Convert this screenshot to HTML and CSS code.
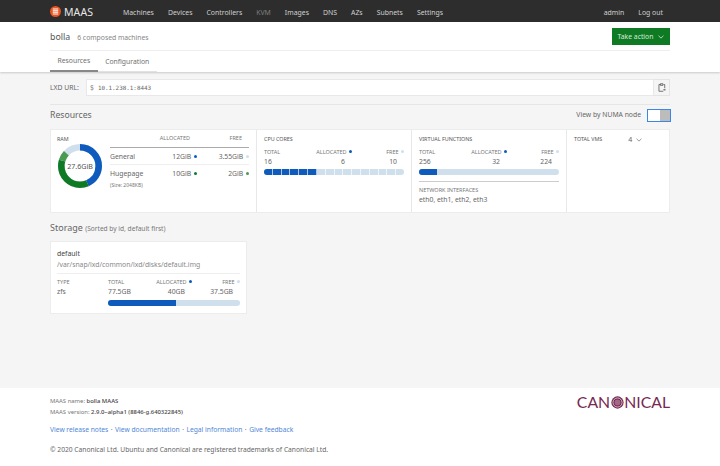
FILE: index.html
```html
<!DOCTYPE html>
<html lang="en">
<head>
<meta charset="utf-8">
<title>bolla | MAAS</title>
<link rel="stylesheet" href="styles.css">
</head>
<body>
<header class="nav">
  <div class="wrap nav-row">
    <a class="brand">
      <svg class="brand-mark" viewBox="0 0 12 12" width="11" height="11"><circle cx="6" cy="6" r="6" fill="#e95420"/><path d="M3 3.4h6M3 5.1h6M3 6.9h6M3 8.6h6" stroke="#fff" stroke-width="1.1"/></svg>
      <span class="brand-name">MAAS</span>
    </a>
    <nav class="nav-links">
      <a>Machines</a><a>Devices</a><a>Controllers</a><a class="is-active">KVM</a><a>Images</a><a>DNS</a><a>AZs</a><a>Subnets</a><a>Settings</a>
    </nav>
    <nav class="nav-links nav-user"><a>admin</a><a>Log out</a></nav>
  </div>
</header>

<section class="head">
  <div class="wrap">
    <div class="title-row">
      <div class="title"><h1>bolla</h1><span>6 composed machines</span></div>
      <button class="action">Take action
        <svg viewBox="0 0 8 5" width="6" height="4"><path d="M.7.8 4 4l3.3-3.2" fill="none" stroke="#fff" stroke-width=".9"/></svg>
      </button>
    </div>
    <div class="tabs"><a class="tab is-on">Resources</a><a class="tab">Configuration</a></div>
  </div>
</section>

<main class="page">
  <div class="wrap">
    <div class="url-row">
      <label>LXD URL:</label>
      <div class="url-box"><span class="dollar">$</span><code>10.1.238.1:8443</code></div>
      <button class="copy" aria-label="Copy">
        <svg viewBox="0 0 10 11" width="8" height="9"><path d="M3 1.8H1.2v8.4h5.4M7 1.8h1.4v4.6M3 .8h3.2v2H3z" fill="none" stroke="#555" stroke-width="1"/><path d="M6.8 8.4h2.6" stroke="#555" stroke-width="1.4"/></svg>
      </button>
    </div>
    <div class="res-head">
      <h2>Resources</h2>
      <div class="numa"><span>View by NUMA node</span><span class="switch"><i></i></span></div>
    </div>

    <div class="res-card">
      <section class="cell ram">
        <h4 class="title-sm">RAM</h4>
        <div class="ram-body">
          <div class="donut">
            <svg viewBox="0 0 44 44" width="44" height="44">
              <g fill="none" stroke-width="6.6" transform="rotate(-90 22 22)">
                <circle cx="22" cy="22" r="18.7" stroke="#cfe0ec"/>
                <circle cx="22" cy="22" r="18.7" stroke="#0e5bbd" pathLength="276" stroke-dasharray="120 156"/>
                <circle cx="22" cy="22" r="18.7" stroke="#0e7a24" pathLength="276" stroke-dasharray="100 176" stroke-dashoffset="-120"/>
                <circle cx="22" cy="22" r="18.7" stroke="#4a9a52" pathLength="276" stroke-dasharray="20 256" stroke-dashoffset="-220"/>
              </g>
            </svg>
            <span>27.6GiB</span>
          </div>
          <div class="ram-table">
            <div class="ram-row ram-top"><span></span><span class="lbl pad">ALLOCATED</span><span class="lbl pad">FREE</span></div>
            <div class="ram-row ram-mid"><span>General</span><span>12GiB <i class="dot blue"></i></span><span>3.55GiB <i class="dot pale"></i></span></div>
            <div class="ram-row ram-last"><span>Hugepage</span><span>10GiB <i class="dot green"></i></span><span>2GiB <i class="dot lgreen"></i></span></div>
            <small>(Size: 2048KB)</small>
          </div>
        </div>
      </section>

      <section class="cell">
        <h4 class="title-sm">CPU CORES</h4>
        <div class="stats">
          <span class="lbl">TOTAL</span><span class="lbl r">ALLOCATED <i class="dot blue"></i></span><span class="lbl r">FREE <i class="dot pale"></i></span>
          <span>16</span><span class="r pad">6</span><span class="r pad">10</span>
        </div>
        <div class="bar segs">
          <i class="on"></i><i class="on"></i><i class="on"></i><i class="on"></i><i class="on"></i><i class="on"></i><i></i><i></i><i></i><i></i><i></i><i></i><i></i><i></i><i></i><i></i>
        </div>
      </section>

      <section class="cell">
        <h4 class="title-sm">VIRTUAL FUNCTIONS</h4>
        <div class="stats">
          <span class="lbl">TOTAL</span><span class="lbl r">ALLOCATED <i class="dot blue"></i></span><span class="lbl r">FREE <i class="dot pale"></i></span>
          <span>256</span><span class="r pad">32</span><span class="r pad">224</span>
        </div>
        <div class="bar"><div class="fill" style="width:12.5%"></div></div>
        <div class="net">
          <div class="lbl">NETWORK INTERFACES</div>
          <div>eth0, eth1, eth2, eth3</div>
        </div>
      </section>

      <section class="cell vms">
        <h4 class="title-sm">TOTAL VMS</h4>
        <span class="vm-count">4
          <svg viewBox="0 0 8 5" width="6" height="4"><path d="M.7.8 4 4l3.3-3.2" fill="none" stroke="#555" stroke-width=".8"/></svg>
        </span>
      </section>
    </div>

    <h2 class="storage-head">Storage <small>(Sorted by id, default first)</small></h2>
    <article class="pool">
      <h3>default</h3>
      <div class="path">/var/snap/lxd/common/lxd/disks/default.img</div>
      <div class="pool-grid">
        <span class="lbl">TYPE</span><span class="lbl">TOTAL</span><span class="lbl r">ALLOCATED <i class="dot blue"></i></span><span class="lbl r">FREE <i class="dot pale"></i></span>
        <span>zfs</span><span>77.5GB</span><span class="r pad">40GB</span><span class="r pad">37.5GB</span>
        <div class="bar pool-bar"><div class="fill" style="width:51.6%"></div></div>
      </div>
    </article>
  </div>
</main>

<footer class="foot">
  <div class="wrap">
    <div class="foot-top">
      <div class="meta">
        <div>MAAS name: <b>bolla MAAS</b></div>
        <div>MAAS version: <b>2.9.0~alpha1 (8846-g.640322845)</b></div>
      </div>
      <div class="canonical" aria-label="Canonical"><span>CAN</span><svg viewBox="0 0 14 14" width="13" height="13"><circle cx="7" cy="7" r="6.6" fill="#772953"/><circle cx="7" cy="7" r="4.9" fill="none" stroke="#fff" stroke-width=".7"/><circle cx="7" cy="7" r="3.2" fill="#a06a86"/></svg><span>NICAL</span></div>
    </div>
    <div class="links"><a>View release notes</a><span class="sep">·</span><a>View documentation</a><span class="sep">·</span><a>Legal information</a><span class="sep">·</span><a>Give feedback</a></div>
    <p class="copy-line">© 2020 Canonical Ltd. Ubuntu and Canonical are registered trademarks of Canonical Ltd.</p>
  </div>
</footer>
</body>
</html>
```

FILE: styles.css
```css
* { box-sizing: border-box; }
html, body { margin: 0; padding: 0; }
body {
  font-family: "Noto Sans", "Open Sans", sans-serif;
  font-size: 6.8px;
  line-height: 10px;
  color: #666;
  background: #fff;
  width: 720px;
  height: 466px;
  overflow: hidden;
}
.wrap { width: 620px; margin: 0 auto; }
h1, h2, h3, h4, p { margin: 0; font-weight: 400; }
button { font: inherit; border: 0; padding: 0; }

.nav { background: #2d2d2d; height: 22px; }
.nav-row { display: flex; align-items: center; height: 22px; }
.brand { display: flex; align-items: center; gap: 3px; width: 73px; }
.brand-name { color: #e6e6e6; font-size: 10.5px; letter-spacing: .1px; padding-top: 1px; }
.nav-links { display: flex; gap: 14px; padding-top: 3px; }
.nav-links a { color: #cfcfcf; font-size: 6.9px; }
.nav-links a.is-active { color: #808080; }
.nav-user { margin-left: auto; margin-right: 7px; }

.head { background: #fff; height: 50px; box-shadow: 0 1px 2px rgba(0,0,0,.18); position: relative; }
.title-row { display: flex; align-items: center; justify-content: space-between; height: 29px; border-bottom: 1px solid #eee; padding-top: 1px; }
.title { display: flex; align-items: baseline; gap: 7px; padding-top: 2px; }
.title h1 { font-size: 8.8px; color: #555; }
.title span { font-size: 6.8px; color: #858585; }
.action { display: flex; align-items: center; justify-content: center; gap: 5px; width: 58px; height: 17px; background: #0e7a24; color: #d8ead9; font-size: 6.8px; }
.tabs { display: flex; height: 21px; }
.tab { padding: 1px 7.5px 0; display: flex; align-items: center; border-bottom: 1px solid #e2e2e2; color: #707070; }
.tab.is-on { border-bottom: 2px solid #888; }

.page { background: #f5f5f5; height: 316px; padding-top: 7px; }
.url-row { display: flex; align-items: center; height: 17px; }
.url-row label { width: 36px; color: #666; padding-top: 1px; }
.url-box { flex: 1; display: flex; align-items: center; gap: 4px; height: 17px; padding-left: 3px; background: #fff; border: 1px solid #e8e8e8; }
.dollar { color: #888; }
code { font-family: "DejaVu Sans Mono", monospace; font-size: 5.9px; color: #666; }
.copy { width: 16px; height: 17px; display: flex; align-items: center; justify-content: center; background: #f5f5f5; border: 1px solid #e4e4e4; border-left: 0; }

.res-head { display: flex; align-items: center; justify-content: space-between; margin-top: 8px; border-top: 1px solid #e6e6e6; padding-bottom: 4px; height: 25px; }
.res-head h2 { font-size: 8.7px; color: #666; line-height: 14px; }
.numa { display: flex; align-items: center; gap: 6px; color: #666; margin-right: -1px; }
.switch { width: 24px; height: 13px; border: 1px solid #3a87e8; background: #bcbcbc; display: block; }
.switch i { display: block; width: 12px; height: 100%; background: #fff; }

.res-card { display: grid; grid-template-columns: 205px 155px 155px 1fr; height: 84px; background: #fff; border: 1px solid #ececec; }
.cell { padding: 4px 7px 0; border-left: 1px solid #e8e8e8; }
.cell:first-child { border-left: 0; padding-left: 6px; }
.title-sm { font-size: 5.4px; line-height: 10px; color: #555; }
.lbl { font-size: 5.5px; color: #777; }
.r { text-align: right; }
.pad { padding-right: 7px; }
.dot { display: inline-block; width: 3px; height: 3px; border-radius: 50%; margin-left: 1px; vertical-align: 1px; }
.blue { background: #0e5bbd; }
.pale { background: #cfe0ec; }
.green { background: #0e7a24; }
.lgreen { background: #4a9a52; }

.ram-body { display: flex; gap: 8px; margin-top: -2px; }
.donut { position: relative; width: 44px; height: 44px; margin-left: 1px; margin-top: 2px; flex: none; }
.donut svg { display: block; }
.donut span { position: absolute; inset: 0; display: flex; align-items: center; justify-content: center; color: #555; font-size: 7.1px; }
.ram-table { flex: 1; margin-top: -9px; }
.ram-row { display: grid; grid-template-columns: 47px 40px 1fr; text-align: right; align-items: center; }
.ram-row > :first-child { text-align: left; }
.ram-top { height: 15px; border-bottom: 1px solid #aaa; align-items: start; }
.ram-mid { height: 17px; border-bottom: 1px solid #eee; padding-top: 1px; }
.ram-last { height: 17px; }
.ram-table small { font-size: 5px; color: #777; line-height: 8px; display: block; margin-top: -1px; }

.stats { display: grid; grid-template-columns: 40px 48px 1fr; margin-top: 4px; line-height: 9px; }
.bar { position: relative; height: 6px; border-radius: 3px; background: #cfe0ec; margin-top: 3px; overflow: hidden; }
.fill { height: 100%; background: #0e5bbd; }
.segs { display: flex; }
.segs i { flex: 1; border-right: 1px solid rgba(255,255,255,.65); }
.segs i:last-child { border-right: 0; }
.segs i.on { background: #0e5bbd; }
.net { margin-top: 6px; padding-top: 4px; border-top: 1px solid #ccc; }
.net .lbl { line-height: 9px; }

.vms { display: flex; align-items: flex-start; gap: 26px; }
.vm-count { display: flex; align-items: center; gap: 4px; font-size: 7px; color: #666; padding-top: 1px; }

.storage-head { font-size: 9px; color: #666; line-height: 14px; margin-top: 8px; height: 14px; }
.storage-head small { font-size: 6.6px; color: #777; }
.pool { width: 197px; height: 73px; margin-top: 6px; padding: 7px 6px 0; background: #fff; border: 1px solid #ececec; }
.pool h3 { font-size: 6.9px; color: #444; line-height: 10px; }
.path { color: #888; line-height: 11px; border-bottom: 1px solid #eee; height: 15px; }
.pool-grid { display: grid; grid-template-columns: 51px 33px 51px 1fr; margin-top: 4px; line-height: 9px; }
.pool-bar { grid-column: 2 / 5; margin-top: 4px; }

.foot { background: #fff; height: 78px; padding-top: 8px; font-size: 5.9px; color: #777; }
.foot-top { display: flex; justify-content: space-between; align-items: flex-start; }
.meta div { line-height: 10.5px; }
.meta b { font-weight: 500; color: #444; }
.canonical { display: flex; align-items: center; gap: .5px; color: #772953; font-family: "Lato", sans-serif; font-size: 15.8px; line-height: 14px; margin-top: -1px; }
.links { margin-top: 8px; font-size: 6.7px; color: #777; line-height: 10px; }
.links a { color: #4f87d8; }
.sep { margin: 0 2.5px; }
.copy-line { margin-top: 10px; font-size: 6.7px; color: #666; }
```
